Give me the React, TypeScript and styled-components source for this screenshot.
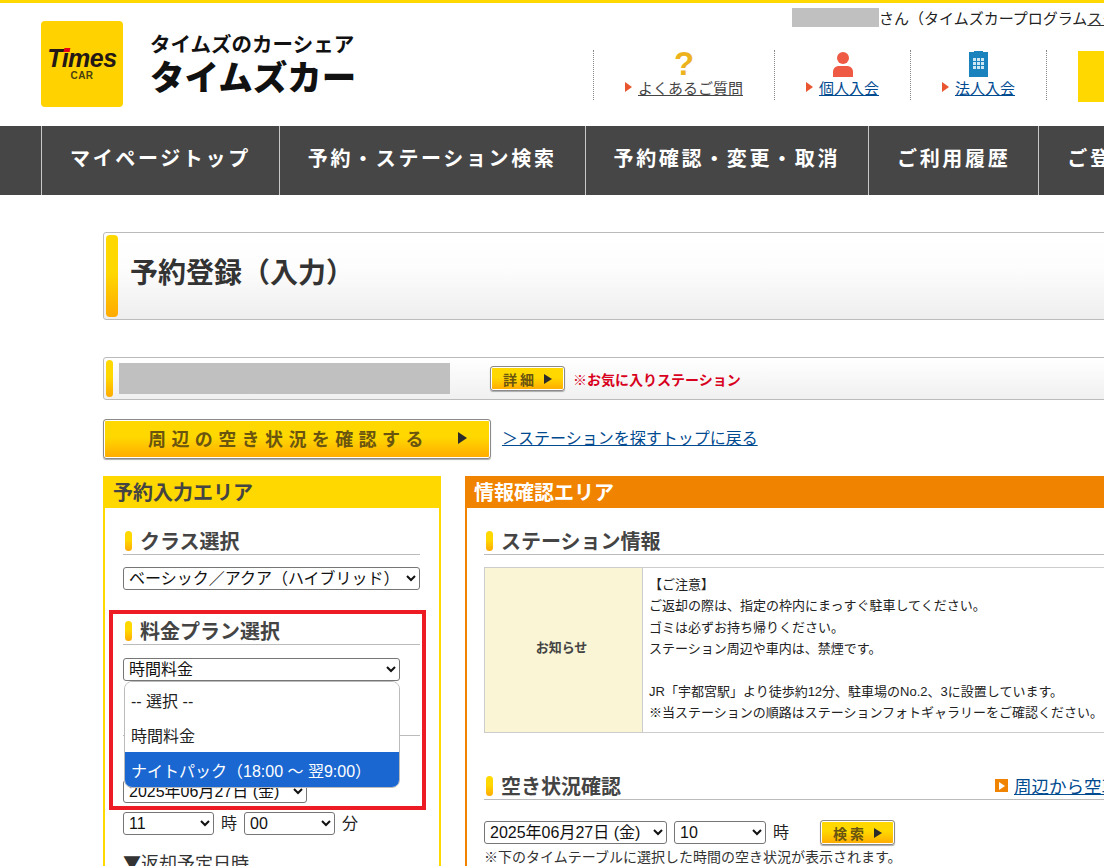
import React from 'react';
import styled, { createGlobalStyle } from 'styled-components';

const GlobalStyle = createGlobalStyle`
  html, body {
    margin: 0;
    padding: 0;
    background: #fff;
    overflow: hidden;
  }
  body, select, option, button {
    font-family: 'Liberation Sans', 'Noto Sans CJK JP', sans-serif;
    text-spacing-trim: space-all;
  }
`;

const yellowGrad = 'linear-gradient(#ffd800, #ffd800 45%, #ffaa00)';

const Page = styled.div`
  width: 1104px;
  height: 866px;
  overflow: hidden;
  border-top: 3px solid #ffd800;
  box-sizing: border-box;
  color: #333;
`;

const Header = styled.header`
  display: flex;
  width: 1400px;
  height: 123px;
  padding-left: 41px;
  box-sizing: border-box;
`;

const LogoMark = styled.div`
  flex: none;
  width: 82px;
  height: 86px;
  margin-top: 18px;
  border-radius: 4px;
  background: #ffd200;
  display: flex;
  flex-direction: column;
  align-items: center;
  justify-content: center;
  color: #231815;
`;

const LogoTimes = styled.span`
  font: italic 700 25px/24px 'Liberation Sans', sans-serif;
  letter-spacing: -0.5px;
`;

const LogoDot = styled.span`
  position: relative;
  &::after {
    content: '';
    position: absolute;
    top: 4px;
    left: 2px;
    width: 6px;
    height: 4px;
    background: #e60012;
    transform: skewX(-12deg);
  }
`;

const LogoCar = styled.span`
  font: 700 10px/12px 'Liberation Sans', sans-serif;
  letter-spacing: 0.4px;
  color: #4a3f10;
`;

const LogoText = styled.div`
  flex: none;
  width: 300px;
  margin: 28px 0 0 27px;
  color: #111;
  font-family: 'Noto Sans CJK JP', sans-serif;
  font-weight: 700;
`;

const LogoSub = styled.div`
  font-size: 20.5px;
  line-height: 24px;
`;

const LogoMain = styled.div`
  margin-top: 3px;
  font-size: 34.5px;
  line-height: 34px;
  font-weight: 900;
`;

const HeaderRight = styled.div`
  flex: none;
  margin-left: 143px;
  width: 700px;
`;

const UserLine = styled.div`
  display: flex;
  align-items: center;
  height: 19px;
  margin-top: 5px;
  padding-left: 199px;
  font-size: 15px;
  color: #222;
  white-space: nowrap;
`;

const Redacted = styled.span<{ $w: number; $h: number }>`
  display: block;
  flex: none;
  width: ${p => p.$w}px;
  height: ${p => p.$h}px;
  background: #c0c0c0;
`;

const UserLink = styled.span`
  text-decoration: underline;
  color: #333;
`;

const LinkRow = styled.nav`
  display: flex;
  align-items: flex-start;
  margin-top: 23px;
`;

const LinkCell = styled.div<{ $w: number }>`
  width: ${p => p.$w}px;
  height: 50px;
  box-sizing: border-box;
  border-left: 1px dotted #888;
  display: flex;
  flex-direction: column;
  align-items: center;
`;

const IconSlot = styled.div`
  height: 27px;
  display: flex;
  align-items: flex-end;
  justify-content: center;
`;

const QuestionMark = styled.span`
  font: 700 33px/27px 'Liberation Sans', sans-serif;
  color: #ecb31f;
`;

const LinkLabel = styled.div`
  display: flex;
  align-items: center;
  gap: 6px;
  height: 20px;
  font-size: 15px;
  white-space: nowrap;
  &::before {
    content: '';
    border-left: 7px solid #e8552f;
    border-top: 5px solid transparent;
    border-bottom: 5px solid transparent;
  }
`;

const LinkText = styled.a<{ $dark?: boolean }>`
  color: ${p => (p.$dark ? '#444' : '#004a8f')};
  text-decoration: underline;
`;

const YellowBlock = styled.div`
  flex: none;
  width: 120px;
  height: 51px;
  margin: 1px 0 0 31px;
  background: #ffd800;
`;

const GlobalNav = styled.nav`
  display: flex;
  width: 1400px;
  height: 69px;
  padding-left: 41px;
  box-sizing: border-box;
  background: #464646;
`;

const NavItem = styled.div`
  display: flex;
  align-items: center;
  padding: 0 28px 7px;
  border-left: 1px solid #c8c8c8;
  color: #fff;
  font-size: 20px;
  font-weight: 700;
  letter-spacing: 2.65px;
  white-space: nowrap;
  font-family: 'Noto Sans CJK JP', sans-serif;
`;

const Main = styled.main`
  width: 1500px;
  padding: 37px 0 0 103px;
  box-sizing: border-box;
`;

const TitleBox = styled.div`
  display: flex;
  align-items: center;
  width: 1200px;
  height: 88px;
  box-sizing: border-box;
  border: 1px solid #bbb;
  border-radius: 3px;
  padding: 2px;
  background: linear-gradient(#fff, #fdfdfd 40%, #eee);
`;

const Pill = styled.span<{ $w: number; $h?: number }>`
  display: block;
  flex: none;
  width: ${p => p.$w}px;
  height: ${p => (p.$h ? `${p.$h}px` : '100%')};
  border-radius: 4px;
  background: ${yellowGrad};
`;

const PageTitle = styled.h1`
  margin: 0 0 10px 12px;
  font-size: 28px;
  font-weight: 700;
  color: #333;
  font-family: 'Noto Sans CJK JP', sans-serif;
`;

const StationBar = styled.div`
  display: flex;
  align-items: center;
  width: 1200px;
  height: 43px;
  margin-top: 37px;
  box-sizing: border-box;
  border: 1px solid #bbb;
  border-radius: 3px;
  padding: 2px;
  background: linear-gradient(#fff, #f0f0f0);
`;

const StationName = styled(Redacted)`
  margin-left: 6px;
`;

const SmallButton = styled.button<{ $ml: number }>`
  flex: none;
  display: flex;
  align-items: center;
  justify-content: center;
  gap: 7px;
  width: 75px;
  height: 25px;
  margin-left: ${p => p.$ml}px;
  padding: 0;
  border: 1px solid #8a8a8a;
  border-radius: 3px;
  box-shadow: inset 0 0 0 1px #fff, 0 1px 1px #aaa;
  background: ${yellowGrad};
  color: #6a5510;
  font-family: 'Noto Sans CJK JP', sans-serif;
  font-size: 14px;
  font-weight: 700;
  letter-spacing: 3px;
`;

const Arrow = styled.span<{ $size?: number }>`
  display: block;
  flex: none;
  border-left: ${p => (p.$size ?? 5) * 1.6}px solid #2b2b2b;
  border-top: ${p => p.$size ?? 5}px solid transparent;
  border-bottom: ${p => p.$size ?? 5}px solid transparent;
`;

const FavNote = styled.span`
  margin-left: 8px;
  color: #d8001c;
  font-size: 14px;
  font-weight: 700;
  white-space: nowrap;
`;

const ActionRow = styled.div`
  display: flex;
  align-items: center;
  gap: 11px;
  margin-top: 19px;
`;

const BigButton = styled.button`
  display: flex;
  align-items: center;
  justify-content: flex-start;
  gap: 29px;
  width: 388px;
  height: 40px;
  padding: 0 0 2px 44px;
  border: 1px solid #8a8a8a;
  border-radius: 3px;
  box-shadow: inset 0 0 0 1px #fff, 0 1px 1px #aaa;
  background: ${yellowGrad};
  color: #6a5510;
  font-family: 'Noto Sans CJK JP', sans-serif;
  font-size: 18px;
  font-weight: 700;
  letter-spacing: 5.4px;
  white-space: nowrap;
`;

const BackLink = styled.a`
  padding-bottom: 4px;
  color: #004a8f;
  font-size: 16px;
  text-decoration: underline;
  white-space: nowrap;
`;

const Columns = styled.div`
  display: flex;
  align-items: flex-start;
  gap: 24px;
  margin-top: 17px;
`;

const Panel = styled.section<{ $w: number; $color: string }>`
  position: relative;
  flex: none;
  width: ${p => p.$w}px;
  box-sizing: border-box;
  border: solid ${p => p.$color};
  border-width: 0 2px;
`;

const PanelHead = styled.h2<{ $bg: string; $color: string; $pl: number }>`
  margin: 0 -2px;
  height: 32px;
  padding-left: ${p => p.$pl}px;
  background: ${p => p.$bg};
  color: ${p => p.$color};
  font-size: 20px;
  line-height: 32px;
  font-weight: 700;
  font-family: 'Noto Sans CJK JP', sans-serif;
`;

const PanelBody = styled.div<{ $pad: number }>`
  padding: 22px 19px 40px ${p => p.$pad}px;
`;

const SectionHead = styled.h3<{ $mt?: number }>`
  display: flex;
  align-items: center;
  gap: 8px;
  height: 25px;
  box-sizing: border-box;
  margin: ${p => p.$mt ?? 0}px 0 0;
  padding: 0 0 3px 2px;
  border-bottom: 1px solid #bbb;
  color: #444;
  font-size: 20px;
  font-weight: 700;
  white-space: nowrap;
  font-family: 'Noto Sans CJK JP', sans-serif;
`;

const Select = styled.select<{ $w: number }>`
  display: block;
  flex: none;
  width: ${p => p.$w}px;
  height: 23px;
  padding: 0 0 0 1px;
  border: 1px solid #767676;
  border-radius: 3px;
  background: #fff;
  color: #111;
  font-size: 16px;
`;

const FieldRow = styled.div<{ $mt: number }>`
  display: flex;
  align-items: center;
  gap: 7px;
  margin-top: ${p => p.$mt}px;
  font-size: 16px;
  line-height: 20px;
  color: #222;
`;

const PlanField = styled.div`
  position: relative;
`;

const DropDown = styled.ul`
  position: absolute;
  z-index: 2;
  top: 23px;
  left: 1px;
  width: 276px;
  margin: 0;
  padding: 0;
  box-sizing: border-box;
  list-style: none;
  background: #fff;
  border: 1px solid #bbb;
  border-radius: 8px;
  overflow: hidden;
  font-size: 16px;
`;

const DropOption = styled.li<{ $active?: boolean }>`
  display: flex;
  align-items: center;
  height: 35px;
  padding-left: 6px;
  white-space: nowrap;
  color: ${p => (p.$active ? '#fff' : '#222')};
  background: ${p => (p.$active ? '#1a67d2' : '#fff')};
`;

const RedFrame = styled.div`
  position: absolute;
  z-index: 3;
  top: 134px;
  left: 4px;
  width: 317px;
  height: 200px;
  box-sizing: border-box;
  border: 4px solid #ed1c24;
  pointer-events: none;
`;

const HiddenLine = styled.div`
  height: 25px;
  box-sizing: border-box;
  margin-top: 30px;
  border-bottom: 1px solid #bbb;
`;

const SubLabel = styled.div`
  margin-top: 16px;
  font-family: 'Noto Sans CJK JP', sans-serif;
  font-size: 18px;
  line-height: 22px;
  color: #333;
  white-space: nowrap;
`;

const NoticeTable = styled.div`
  display: flex;
  width: 800px;
  height: 166px;
  margin-top: 12px;
  box-sizing: border-box;
  border: 1px solid #ccc;
`;

const NoticeLabel = styled.div`
  flex: none;
  display: flex;
  align-items: center;
  justify-content: center;
  width: 158px;
  padding: 0 4px 7px 0;
  box-sizing: border-box;
  border-right: 1px solid #ccc;
  background: #f9f5d5;
  color: #444;
  font-size: 13px;
  font-weight: 700;
`;

const NoticeBody = styled.div`
  padding: 6px 6px;
  font-size: 13px;
  line-height: 21.33px;
  color: #222;
  white-space: nowrap;
`;

const AvailHead = styled.div`
  display: grid;
  grid-template-columns: 511px 1fr;
  align-items: end;
  margin-top: 42px;
`;

const AvailLink = styled.a`
  display: flex;
  align-items: center;
  gap: 6px;
  height: 25px;
  box-sizing: border-box;
  padding-bottom: 3px;
  border-bottom: 1px solid #bbb;
  font-size: 17.5px;
  color: #004a8f;
  white-space: nowrap;
  span {
    text-decoration: underline;
  }
`;

const AvailIcon = styled.i`
  display: flex;
  align-items: center;
  justify-content: center;
  width: 13px;
  height: 13px;
  background: #f08300;
  &::before {
    content: '';
    border-left: 6px solid #fff;
    border-top: 4px solid transparent;
    border-bottom: 4px solid transparent;
  }
`;

const Hint = styled.p`
  margin: 2px 0 0;
  font-size: 14px;
  line-height: 20px;
  color: #333;
  white-space: nowrap;
`;

const PersonIcon = () => (
  <svg width="20" height="25" viewBox="0 0 20 25">
    <circle cx="10" cy="6" r="6" fill="#ef5a45" />
    <path d="M0 25v-5c0-4 3-6 6-6h8c3 0 6 2 6 6v5z" fill="#ef5a45" />
  </svg>
);

const BuildingIcon = () => (
  <svg width="19" height="26" viewBox="0 0 19 26">
    <path d="M0 1h5V0h9v1h5v25H0z" fill="#1a82bd" />
    <g fill="#cfe6f3">
      {[7, 11, 15].map(y =>
        [4, 8, 12].map(x => <rect key={`${x}-${y}`} x={x} y={y} width="3" height="3" />)
      )}
    </g>
  </svg>
);

const App: React.FC = () => (
  <>
    <GlobalStyle />
    <Page>
      <Header>
        <LogoMark>
          <LogoTimes>T<LogoDot>i</LogoDot>mes</LogoTimes>
          <LogoCar>CAR</LogoCar>
        </LogoMark>
        <LogoText>
          <LogoSub>タイムズのカーシェア</LogoSub>
          <LogoMain>タイムズカー</LogoMain>
        </LogoText>
        <HeaderRight>
          <UserLine>
            <Redacted $w={87} $h={19} />
            さん（タイムズカープログラム<UserLink>スタンダード</UserLink>）
          </UserLine>
          <LinkRow>
            <LinkCell $w={181}>
              <IconSlot><QuestionMark>?</QuestionMark></IconSlot>
              <LinkLabel><LinkText $dark>よくあるご質問</LinkText></LinkLabel>
            </LinkCell>
            <LinkCell $w={136}>
              <IconSlot><PersonIcon /></IconSlot>
              <LinkLabel><LinkText>個人入会</LinkText></LinkLabel>
            </LinkCell>
            <LinkCell $w={136}>
              <IconSlot><BuildingIcon /></IconSlot>
              <LinkLabel><LinkText>法人入会</LinkText></LinkLabel>
            </LinkCell>
            <LinkCell $w={1} />
            <YellowBlock />
          </LinkRow>
        </HeaderRight>
      </Header>

      <GlobalNav>
        <NavItem>マイページトップ</NavItem>
        <NavItem>予約・ステーション検索</NavItem>
        <NavItem>予約確認・変更・取消</NavItem>
        <NavItem>ご利用履歴</NavItem>
        <NavItem>ご登録情報</NavItem>
      </GlobalNav>

      <Main>
        <TitleBox>
          <Pill $w={12} />
          <PageTitle>予約登録（入力）</PageTitle>
        </TitleBox>

        <StationBar>
          <Pill $w={7} />
          <StationName $w={331} $h={31} />
          <SmallButton $ml={40}>詳細<Arrow /></SmallButton>
          <FavNote>※お気に入りステーション</FavNote>
        </StationBar>

        <ActionRow>
          <BigButton>周辺の空き状況を確認する<Arrow $size={6} /></BigButton>
          <BackLink>＞ステーションを探すトップに戻る</BackLink>
        </ActionRow>

        <Columns>
          <Panel $w={338} $color="#ffd800">
            <PanelHead $bg="#ffd800" $color="#444" $pl={10}>予約入力エリア</PanelHead>
            <PanelBody $pad={18}>
              <SectionHead><Pill $w={7} $h={20} />クラス選択</SectionHead>
              <FieldRow $mt={12}>
                <Select $w={297} defaultValue="b">
                  <option value="b">ベーシック／アクア（ハイブリッド）</option>
                </Select>
              </FieldRow>
              <SectionHead $mt={30}><Pill $w={7} $h={20} />料金プラン選択</SectionHead>
              <PlanField>
                <FieldRow $mt={13}>
                  <Select $w={277} defaultValue="t">
                    <option value="t">時間料金</option>
                  </Select>
                </FieldRow>
                <DropDown>
                  <DropOption>-- 選択 --</DropOption>
                  <DropOption>時間料金</DropOption>
                  <DropOption $active>ナイトパック（18:00 ～ 翌9:00）</DropOption>
                </DropDown>
              </PlanField>
              <HiddenLine />
              <FieldRow $mt={44}>
                <Select $w={184} defaultValue="d">
                  <option value="d">2025年06月27日 (金)</option>
                </Select>
              </FieldRow>
              <FieldRow $mt={9}>
                <Select $w={91} defaultValue="11">
                  <option value="11">11</option>
                </Select>
                時
                <Select $w={91} defaultValue="00">
                  <option value="00">00</option>
                </Select>
                分
              </FieldRow>
              <SubLabel>▼返却予定日時</SubLabel>
            </PanelBody>
            <RedFrame />
          </Panel>

          <Panel $w={900} $color="#f08300">
            <PanelHead $bg="#f08300" $color="#fff" $pl={9}>情報確認エリア</PanelHead>
            <PanelBody $pad={17}>
              <SectionHead><Pill $w={7} $h={20} />ステーション情報</SectionHead>
              <NoticeTable>
                <NoticeLabel>お知らせ</NoticeLabel>
                <NoticeBody>
                  【ご注意】<br />
                  ご返却の際は、指定の枠内にまっすぐ駐車してください。<br />
                  ゴミは必ずお持ち帰りください。<br />
                  ステーション周辺や車内は、禁煙です。<br />
                  <br />
                  JR「宇都宮駅」より徒歩約12分、駐車場のNo.2、3に設置しています。<br />
                  ※当ステーションの順路はステーションフォトギャラリーをご確認ください。
                </NoticeBody>
              </NoticeTable>
              <AvailHead>
                <SectionHead><Pill $w={7} $h={20} />空き状況確認</SectionHead>
                <AvailLink><AvailIcon /><span>周辺から空車を探す</span></AvailLink>
              </AvailHead>
              <FieldRow $mt={20}>
                <Select $w={183} defaultValue="d">
                  <option value="d">2025年06月27日 (金)</option>
                </Select>
                <Select $w={92} defaultValue="10">
                  <option value="10">10</option>
                </Select>
                時
                <SmallButton $ml={24}>検索<Arrow /></SmallButton>
              </FieldRow>
              <Hint>※下のタイムテーブルに選択した時間の空き状況が表示されます。</Hint>
            </PanelBody>
          </Panel>
        </Columns>
      </Main>
    </Page>
  </>
);

export default App;
